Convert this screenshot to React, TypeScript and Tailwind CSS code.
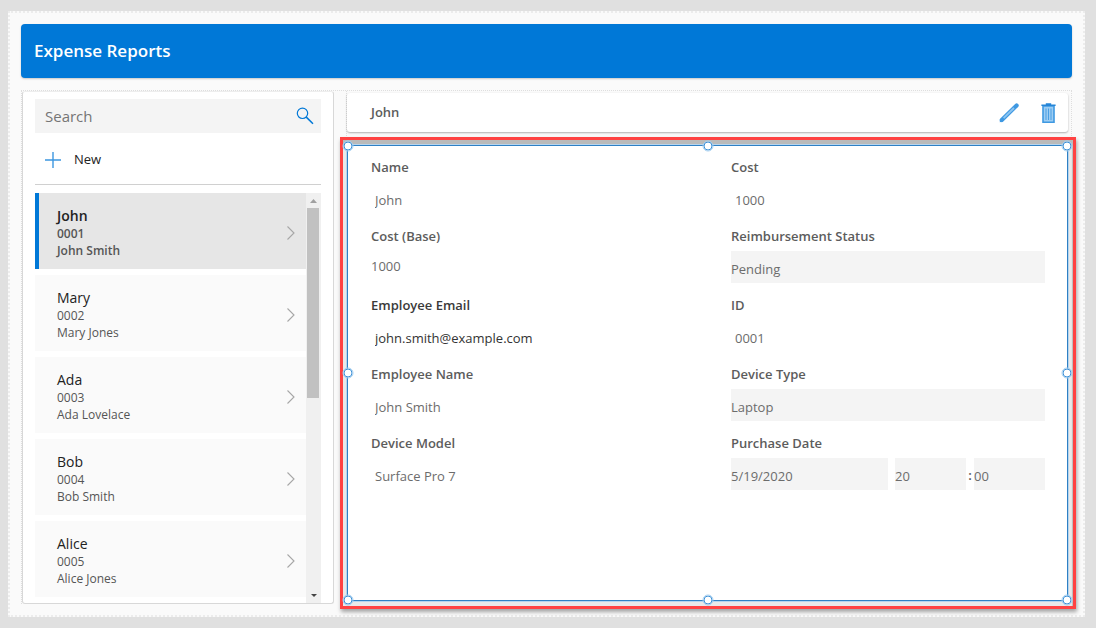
import { useState } from "react";

type Report = { id: string; title: string; employee: string };

const reports: Report[] = [
  { id: "0001", title: "John", employee: "John Smith" },
  { id: "0002", title: "Mary", employee: "Mary Jones" },
  { id: "0003", title: "Ada", employee: "Ada Lovelace" },
  { id: "0004", title: "Bob", employee: "Bob Smith" },
  { id: "0005", title: "Alice", employee: "Alice Jones" },
];

function SearchIcon() {
  return (
    <svg viewBox="0 0 18 18" className="size-[18px]" fill="none" stroke="#0078d7" aria-hidden="true">
      <circle cx="6.5" cy="6.3" r="5.2" strokeWidth="1.2" />
      <path d="M10.3 10.1 17 16.8" strokeWidth="1.5" />
    </svg>
  );
}

function PlusIcon() {
  return (
    <svg viewBox="0 0 16 16" className="size-4" fill="none" stroke="#3d97e0" strokeWidth="1.4" aria-hidden="true">
      <path d="M8 0v16M0 8h16" />
    </svg>
  );
}

function ChevronIcon() {
  return (
    <svg viewBox="0 0 8 14" className="h-[14px] w-2 shrink-0" fill="none" stroke="#a6a6a6" strokeWidth="1.1" aria-hidden="true">
      <path d="M.5.5 7 7 .5 13.5" />
    </svg>
  );
}

function PencilIcon() {
  return (
    <svg viewBox="0 0 20 20" className="size-5" fill="none" strokeLinecap="round" aria-hidden="true">
      <path d="M2.8 17 17.6 2.4" stroke="#3f99e2" strokeWidth="4.2" />
      <path d="M4.6 15.2 15 5" stroke="#8dc5f1" strokeWidth="1.8" strokeLinecap="butt" />
      <path d="M.7 19.2 1.2 15.800 4.200 18.600Z" fill="#3f99e2" />
    </svg>
  );
}

function TrashIcon() {
  return (
    <svg viewBox="0 0 15 20" className="h-5 w-[15px]" aria-hidden="true">
      <path d="M2 3h11v16.2H2Z" fill="#9dcdf3" stroke="#3f99e2" strokeWidth="1.6" />
      <path d="M5 5.5v11.5M7.5 5.5v11.5M10 5.5v11.5" stroke="#4a9fe3" strokeWidth="1" />
      <path d="M.4 1.4h4.4V.3h5.4v1.1h4.4v1.7H.4Z" fill="#2585d8" />
    </svg>
  );
}

function ReportList() {
  const [selected, setSelected] = useState("0001");
  return (
    <div className="flex flex-1">
      <ul className="flex min-w-0 flex-1 flex-col gap-1.5">
        {reports.map((r) => {
          const active = r.id === selected;
          return (
            <li key={r.id}>
              <button
                type="button"
                onClick={() => setSelected(r.id)}
                className={
                  "flex h-[76px] w-full items-center justify-between border-l-4 pt-1 pr-[11px] pl-[18px] text-left " +
                  (active ? "border-[#0078d7] bg-[#e6e6e6]" : "border-[#fafafa] bg-[#fafafa]")
                }
              >
                <span className="flex flex-col pb-0.5">
                  <span className={"text-sm leading-5 text-[#222] " + (active ? "font-semibold" : "")}>{r.title}</span>
                  <span className={"text-xs leading-4 text-[#555] " + (active ? "font-semibold" : "")}>{r.id}</span>
                  <span className={"text-xs leading-[17px] text-[#555] " + (active ? "font-semibold" : "")}>
                    {r.employee}
                  </span>
                </span>
                <ChevronIcon />
              </button>
            </li>
          );
        })}
      </ul>
      <div className="flex w-[15px] flex-col items-center justify-between bg-[#f0f0f0]" aria-hidden="true">
        <div className="flex w-full flex-col">
          <svg viewBox="0 0 15 15" className="size-[15px]">
            <path d="M4 10h7L7.5 6Z" fill="#a0a0a0" />
          </svg>
          <div className="ml-px h-[190px] w-3 bg-[#c1c1c1]" />
        </div>
        <svg viewBox="0 0 15 15" className="size-[15px]">
          <path d="M5 6h6L8 9Z" fill="#444" />
        </svg>
      </div>
    </div>
  );
}

type FieldProps = { id: string; label: string; value: string; variant?: "plain" | "flush" | "filled"; strong?: boolean };

function Field({ id, label, value, variant = "plain", strong = false }: FieldProps) {
  const look =
    variant === "filled" ? "bg-[#f4f4f4] h-8 pt-[3px]" : variant === "flush" ? "h-[30px]" : "pl-1 pt-[3px] h-8";
  return (
    <div className="flex h-[69px] flex-col">
      <label
        htmlFor={id}
        className={"text-[13px] leading-[30px] font-semibold " + (strong ? "text-[#3a3a3a]" : "text-[#5c5c5c]")}
      >
        {label}
      </label>
      <input
        id={id}
        readOnly
        value={value}
        className={"w-full text-[13px] outline-none " + look + (strong ? " text-[#333]" : " text-[#6c6c6c]")}
      />
    </div>
  );
}

function PurchaseDate() {
  const box = "h-8 min-w-0 bg-[#f4f4f4] pt-[3px] text-[13px] text-[#6c6c6c] outline-none";
  return (
    <div className="flex h-[69px] flex-col">
      <label htmlFor="date" className="text-[13px] leading-[30px] font-semibold text-[#5c5c5c]">
        Purchase Date
      </label>
      <div className="flex items-center">
        <input id="date" readOnly value="5/19/2020" className={box + " mr-[7px] flex-[157]"} />
        <input aria-label="Hour" readOnly value="20" className={box + " flex-[71]"} />
        <span className="w-2 pt-[3px] text-center text-[13px] font-semibold text-[#555]">:</span>
        <input aria-label="Minute" readOnly value="00" className={box + " flex-[71]"} />
      </div>
    </div>
  );
}

const handles = [
  "left-0 top-0",
  "left-1/2 top-0",
  "left-full top-0",
  "left-0 top-1/2",
  "left-full top-1/2",
  "left-0 top-full",
  "left-1/2 top-full",
  "left-full top-full",
];

export default function App() {
  return (
    <div className="flex min-h-screen flex-col bg-[#e0e0e0] pt-[11px] pr-[11px] pb-[11px] pl-2 font-['Open_Sans','Noto_Sans',sans-serif]">
      <div className="flex flex-1 flex-col gap-3 border-2 border-dotted border-[#ececec] bg-[#fafafa] p-[11px]">
        <header className="flex h-[54px] shrink-0 items-center rounded bg-[#0078d7] px-[13px] shadow-[0_1px_2px_rgba(0,0,0,0.2)]">
          <h1 className="text-[17px] font-semibold text-white">Expense Reports</h1>
        </header>

        <main className="flex flex-1 gap-3 border-t border-l border-dotted border-[#dedede]">
          <section
            aria-label="Reports"
            className="flex w-[312px] shrink-0 flex-col rounded-[3px] border border-[#d8d8d8] border-t-[#eee] bg-white px-3 pt-[7px]"
          >
            <div className="flex h-[34px] shrink-0 items-center bg-[#f4f4f4] pr-[7px] pl-2.5">
              <input
                type="text"
                aria-label="Search"
                placeholder="Search"
                className="h-full min-w-0 flex-1 bg-transparent text-[15px] outline-none placeholder:text-[#757575]"
              />
              <SearchIcon />
            </div>
            <div className="mb-2 flex h-[52px] shrink-0 items-center border-b border-[#d0d0d0] pt-0.5 pl-2.5">
              <button type="button" className="flex items-center gap-[13px] text-[13px] text-[#222]">
                <PlusIcon />
                New
              </button>
            </div>
            <ReportList />
          </section>

          <section aria-label="Report details" className="flex min-w-0 flex-1 flex-col border-r border-l border-dotted border-[#dedede] pr-[3px]">
            <div className="mt-0.5 flex h-[39px] shrink-0 items-center justify-between rounded-[3px] bg-white pr-3 pl-6 shadow-[0_1px_2px_rgba(0,0,0,0.3)]">
              <h2 className="text-[13px] font-semibold text-[#5c5c5c]">John</h2>
              <div className="flex items-center gap-[22px]">
                <button type="button" aria-label="Edit">
                  <PencilIcon />
                </button>
                <button type="button" aria-label="Delete">
                  <TrashIcon />
                </button>
              </div>
            </div>

            <div className="relative mt-[13px] mb-[3px] flex flex-1 flex-col">
              <div className="absolute -top-2 -right-2 -bottom-2 -left-[7px] border-3 border-[#ff4242] bg-[#e9e9e9] shadow-[1px_3px_4px_rgba(0,0,0,0.35),inset_-1px_6px_1px_rgba(0,0,0,0.2)]" />
              <form className="relative flex-1 border border-[#2f80c4] bg-white pt-1.5 pr-[22px] pl-[23px] outline outline-[#b5d5ee]">
                <div className="grid grid-cols-2 gap-x-[46px]">
                  <Field id="name" label="Name" value="John" />
                  <Field id="cost" label="Cost" value="1000" />
                  <Field id="base" label="Cost (Base)" value="1000" variant="flush" />
                  <Field id="status" label="Reimbursement Status" value="Pending" variant="filled" />
                  <Field id="email" label="Employee Email" value="john.smith@example.com" strong />
                  <Field id="rid" label="ID" value="0001" />
                  <Field id="employee" label="Employee Name" value="John Smith" />
                  <Field id="type" label="Device Type" value="Laptop" variant="filled" />
                  <Field id="model" label="Device Model" value="Surface Pro 7" />
                  <PurchaseDate />
                </div>
                {handles.map((place) => (
                  <span
                    key={place}
                    className={
                      "absolute size-[9px] -translate-x-1/2 -translate-y-1/2 rounded-full border border-[#3b8fd6] bg-white outline outline-[#a5cff0] " +
                      place
                    }
                  />
                ))}
              </form>
            </div>
          </section>
        </main>
      </div>
    </div>
  );
}
